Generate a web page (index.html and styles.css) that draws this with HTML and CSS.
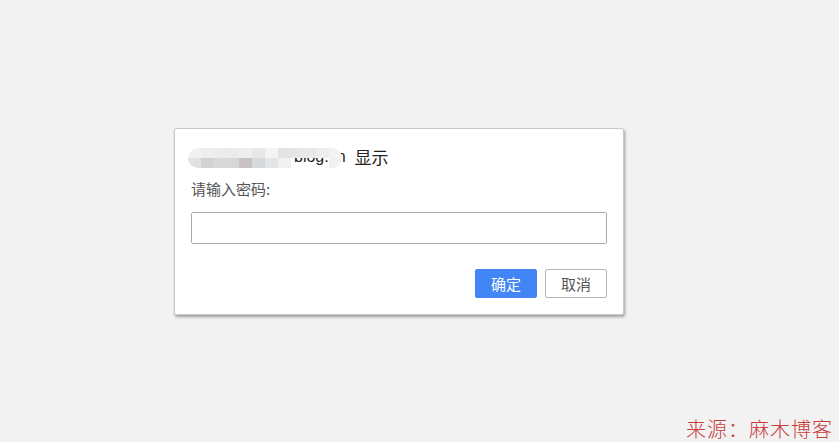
FILE: index.html
```html
<!DOCTYPE html>
<html lang="zh-CN">
<head>
<meta charset="utf-8">
<title>prompt</title>
<link rel="stylesheet" href="styles.css">
</head>
<body>
<div class="dialog">
  <div class="title">
    <span class="host"><span class="pad"></span>blog.cn<span class="mosaic">
      <i class="c1"></i><i class="c2"></i><i class="c3"></i><i class="c4"></i><i class="c5"></i><i class="c6"></i><i class="c7"></i><i class="c8"></i><i class="c9"></i><i class="c10"></i><i class="c11"></i><i class="c12"></i>
      <i class="d1"></i><i class="d2"></i><i class="d3"></i><i class="d4"></i><i class="d5"></i><i class="d6"></i><i class="d7"></i><i class="d8"></i><i class="dt"></i><i class="dt"></i><i class="dt"></i><i class="d12"></i>
    </span></span><span class="show">显示</span>
  </div>
  <div class="label">请输入密码:</div>
  <input class="field" type="text">
  <div class="actions">
    <button class="btn primary">确定</button>
    <button class="btn">取消</button>
  </div>
</div>
<div class="watermark">来源：麻木博客</div>
</body>
</html>
```
FILE: styles.css
```css
html, body {
  margin: 0;
  height: 100%;
}
body {
  background: #f2f2f2;
  padding-top: 128px;
  box-sizing: border-box;
  font-family: "Noto Sans CJK SC", "Liberation Sans", sans-serif;
  overflow: hidden;
}
.dialog {
  margin-left: 174px;
  width: 450px;
  height: 187px;
  box-sizing: border-box;
  background: #fff;
  border: 1px solid #c8c8c8;
  border-radius: 2px;
  box-shadow: 1px 2px 3px rgba(0,0,0,0.35);
  padding: 18px 16px 0 16px;
  display: flex;
  flex-direction: column;
}
.title {
  font-size: 16px;
  line-height: 20px;
  height: 20px;
  color: #222;
  font-family: "Liberation Sans", "Noto Sans CJK SC", sans-serif;
  display: flex;
  align-items: center;
}
.host {
  position: relative;
  display: inline-block;
  margin-left: -3px;
  height: 20px;
  white-space: nowrap;
}
.pad {
  display: inline-block;
  width: 106px;
}
.show {
  margin-left: 9px;
  font-family: "Noto Sans CJK SC", sans-serif;
  font-size: 17px;
}
.mosaic {
  position: absolute;
  z-index: 2;
  left: 0;
  top: 1px;
  width: 154px;
  height: 20px;
  display: grid;
  grid-template-columns: repeat(12, 1fr);
  grid-template-rows: 10px 10px;
  border-radius: 10px;
  overflow: hidden;
}
.mosaic i { display: block; }
.c1 { background: #f1f1f1; } .c2 { background: #eeeeee; } .c3 { background: #ececec; }
.c4 { background: #ebebeb; } .c5 { background: #f0efee; } .c6 { background: #e8e8e8; }
.c7 { background: #f4f4f4; } .c8 { background: #e4e3e2; } .c9 { background: #e6e6e7; }
.c10 { background: #e9e9ea; } .c11 { background: #ededed; } .c12 { background: #f3f3f3; }
.d1 { background: #e2e2e2; } .d2 { background: #d2d2d2; } .d3 { background: #d9d9d9; }
.d4 { background: #d7d7d7; } .d5 { background: #c7c3c3; } .d6 { background: #d6d9db; }
.d7 { background: #e4e4e4; } .d8 { background: #f0f0f0; }
.dt { background: transparent; }
.d12 { background: #f1f1f1; }
.label {
  margin-top: 12px;
  font-size: 15px;
  line-height: 20px;
  color: #555;
}
.field {
  margin: 13px 0 0 0;
  height: 32px;
  box-sizing: border-box;
  border: 1px solid #aaa;
  border-radius: 2px;
  outline: none;
  padding: 0 8px;
  background: #fff;
}
.actions {
  margin-top: 25px;
  display: flex;
  justify-content: flex-end;
  gap: 8px;
}
.btn {
  width: 62px;
  height: 29px;
  box-sizing: border-box;
  border: 1px solid #b4b4b4;
  border-radius: 2px;
  background: #fff;
  color: #555;
  font-family: "Noto Sans CJK SC", "Liberation Sans", sans-serif;
  font-size: 15px;
  padding: 0;
}
.btn.primary {
  background: #4285f4;
  border-color: #4285f4;
  color: #fff;
}
.watermark {
  position: absolute;
  right: 6px;
  bottom: 1px;
  font-family: "Noto Sans CJK SC", sans-serif;
  font-weight: 300;
  font-size: 20px;
  letter-spacing: 1px;
  color: #c83c3c;
  line-height: 24px;
}
```
